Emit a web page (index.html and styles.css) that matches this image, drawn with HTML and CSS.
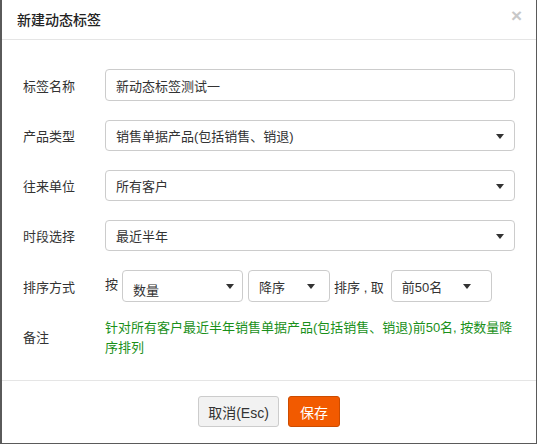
FILE: index.html
```html
<!DOCTYPE html>
<html lang="zh-CN">
<head>
<meta charset="utf-8">
<link rel="stylesheet" href="styles.css">
</head>
<body>
<div class="dialog">
  <div class="header">
    <span class="title">新建动态标签</span>
    <span class="close">×</span>
  </div>
  <div class="body">
    <div class="row">
      <div class="label">标签名称</div>
      <div class="control input">新动态标签测试一</div>
    </div>
    <div class="row">
      <div class="label">产品类型</div>
      <div class="control select">销售单据产品(包括销售、销退)<span class="caret"></span></div>
    </div>
    <div class="row">
      <div class="label">往来单位</div>
      <div class="control select">所有客户<span class="caret"></span></div>
    </div>
    <div class="row">
      <div class="label">时段选择</div>
      <div class="control select">最近半年<span class="caret"></span></div>
    </div>
    <div class="row">
      <div class="label">排序方式</div>
      <div class="sortline">
        <span class="word w1">按</span>
        <div class="select s1"><span class="low">数量</span><span class="caret"></span></div>
        <div class="select s2">降序<span class="caret"></span></div>
        <span class="word w2">排序 , 取</span>
        <div class="select s3">前50名<span class="caret"></span></div>
      </div>
    </div>
    <div class="row remark">
      <div class="label">备注</div>
      <div class="note">针对所有客户最近半年销售单据产品(包括销售、销退)前50名, 按数量降序排列</div>
    </div>
  </div>
  <div class="footer">
    <div class="btn cancel">取消(Esc)</div>
    <div class="btn save">保存</div>
  </div>
</div>
</body>
</html>
```
FILE: styles.css
```css
* { box-sizing: border-box; }
html, body { margin: 0; padding: 0; }
body {
  background: #5a5a5a;
  width: 537px;
  height: 444px;
  overflow: hidden;
  font-family: "Liberation Sans", "Noto Sans CJK SC", sans-serif;
  font-size: 13px;
  color: #333;
}
.dialog {
  margin-left: 2px;
  width: 534px;
  height: 443px;
  background: #fff;
  display: flex;
  flex-direction: column;
}
.header {
  height: 40px;
  border-bottom: 1px solid #e5e5e5;
  display: flex;
  align-items: center;
  justify-content: space-between;
  padding: 0 14px 2px 15px;
}
.title {
  font-size: 14px;
  color: #222;
  font-weight: 500;
}
.close {
  font-size: 19px;
  font-weight: bold;
  color: #c8c8c8;
  line-height: 1;
  margin-top: -6px;
}
.body {
  flex: 1;
  padding: 29px 21px 0 21px;
  display: flex;
  flex-direction: column;
  gap: 19px;
}
.row {
  display: flex;
  align-items: center;
}
.label {
  width: 82px;
  flex: none;
}
.control {
  flex: 1;
  height: 31px;
  border: 1px solid #ccc;
  border-radius: 4px;
  display: flex;
  align-items: center;
  padding: 0 12px 0 10px;
  position: relative;
  color: #333;
}
.input { height: 32px; }
.select { position: relative; }
.caret {
  position: absolute;
  right: 10px;
  top: 50%;
  margin-top: -2px;
  width: 0;
  height: 0;
  border-left: 4px solid transparent;
  border-right: 4px solid transparent;
  border-top: 5px solid #333;
}
.sortline {
  display: flex;
  align-items: center;
  flex: 1;
}
.word { color: #333; }
.w1 { margin-right: 4px; margin-top: -6px; }
.w2 { margin: 0 7px 0 4px; }
.sortline .select {
  height: 32px;
  border: 1px solid #ccc;
  border-radius: 4px;
  display: flex;
  align-items: center;
  padding-left: 10px;
}
.s1 { width: 121px; }
.s1 .low { margin-top: 6px; }
.s1 .caret { right: 8px; }
.s2 { width: 82px; margin-left: 5px; }
.s2 .caret { right: 14px; }
.s3 { width: 101px; }
.s3 .caret { right: 20px; }
.remark {
  margin-top: -3px;
  align-items: center;
}
.remark .label { margin-top: -4px; }
.note {
  width: 412px;
  color: #1a901a;
  line-height: 20px;
}
.footer {
  height: 63px;
  border-top: 1px solid #e5e5e5;
  display: flex;
  justify-content: center;
  align-items: flex-start;
  padding-top: 15px;
  gap: 9px;
}
.btn {
  height: 31px;
  border-radius: 3px;
  display: flex;
  align-items: center;
  justify-content: center;
  font-size: 14px;
}
.cancel {
  width: 81px;
  background: #f2f2f2;
  border: 1px solid #ccc;
  color: #333;
}
.save {
  width: 52px;
  background: #f25a00;
  border: 1px solid #cc4c00;
  color: #fff;
}
```
